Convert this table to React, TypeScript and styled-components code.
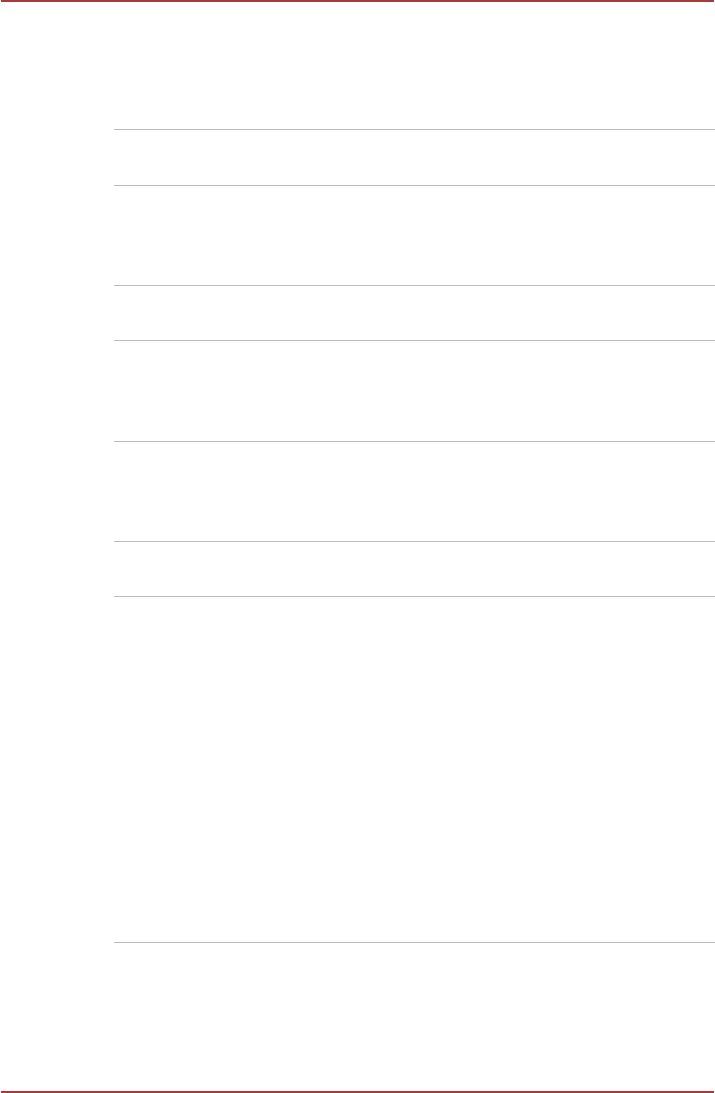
import React from 'react';
import styled, { createGlobalStyle } from 'styled-components';

const GlobalStyle = createGlobalStyle`
  html, body {
    margin: 0;
    padding: 0;
    background: #ffffff;
    font-family: 'Liberation Sans', Arial, sans-serif;
  }
`;

const Page = styled.div`
  display: flex;
  flex-direction: column;
  width: 715px;
  height: 1093px;
  background: #ffffff;
  overflow: hidden;
`;

const Rule = styled.div`
  height: 2px;
  margin: 0 1px;
  background: #a63b3a;
  flex-shrink: 0;
`;

const Body = styled.div`
  flex: 1;
  padding-top: 127px;
  padding-left: 114px;
`;

const Table = styled.div`
  display: flex;
  flex-direction: column;
  border-bottom: 1px solid #bdbdbd;
`;

const Row = styled.div<{ $height: number }>`
  height: ${({ $height }) => $height}px;
  box-sizing: border-box;
  border-top: 1px solid #bdbdbd;
`;

const FooterRule = styled(Rule)`
  margin-bottom: 0;
`;

// heights between successive separators
const rows = [56, 100, 55, 101, 100, 55, 346];

const App: React.FC = () => {
  return (
    <>
      <GlobalStyle />
      <Page>
        <Rule />
        <Body>
          <Table>
            {rows.map((h, i) => (
              <Row key={i} $height={h} />
            ))}
          </Table>
        </Body>
        <FooterRule />
      </Page>
    </>
  );
};

export default App;
